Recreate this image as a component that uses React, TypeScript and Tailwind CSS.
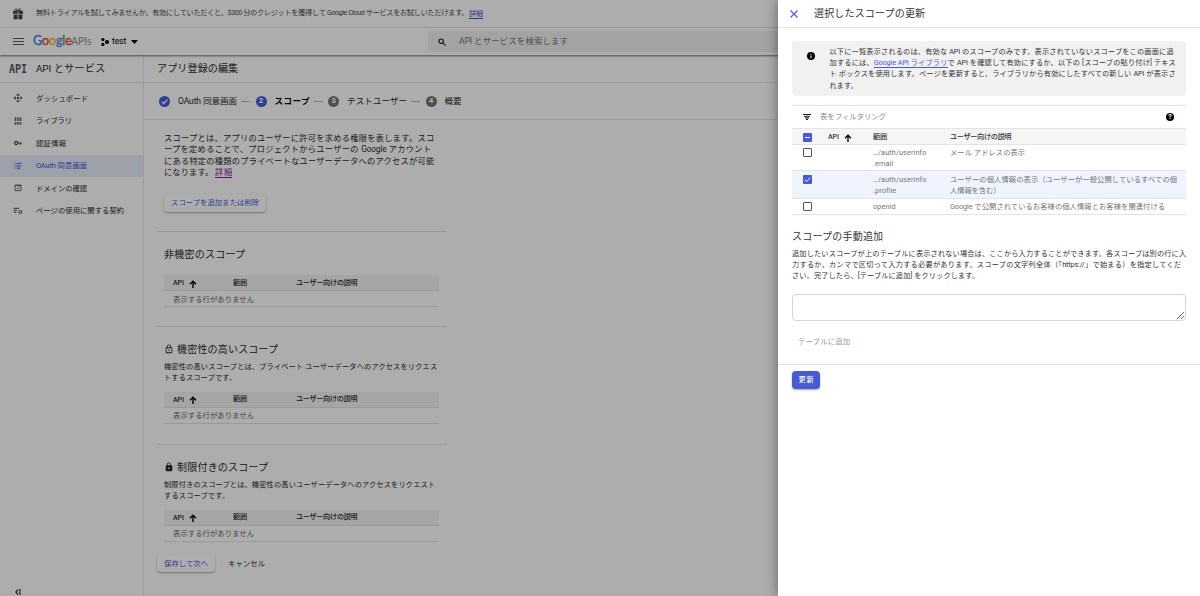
import type { ReactNode } from "react";
import { clsx } from "clsx";

// One line of text, spread over the width given in className.
function Line({ className, children }: { className?: string; children: ReactNode }) {
  return (
    <span className={clsx("block whitespace-nowrap [text-align-last:justify]", className)}>
      {children}
    </span>
  );
}

function ArrowUp({ className }: { className?: string }) {
  return (
    <svg viewBox="0 0 8 8" className={clsx("h-2 w-2 text-black", className)} fill="none" stroke="currentColor" strokeWidth="1.4">
      <path d="M4 8V1.2M1 4.2 4 1.2 7 4.2" />
    </svg>
  );
}

function Lock({ filled }: { filled?: boolean }) {
  return (
    <svg viewBox="0 0 24 24" className="h-[10px] w-[10px] shrink-0" fill="currentColor">
      {filled ? (
        <path d="M18 8h-1V6A5 5 0 0 0 7 6v2H6a2 2 0 0 0-2 2v10a2 2 0 0 0 2 2h12a2 2 0 0 0 2-2V10a2 2 0 0 0-2-2zm-6 9a2 2 0 1 1 0-4 2 2 0 0 1 0 4zm3.1-9H8.9V6a3.1 3.1 0 0 1 6.2 0v2z" />
      ) : (
        <path d="M12 17a2 2 0 1 0 0-4 2 2 0 0 0 0 4zm6-9h-1V6A5 5 0 0 0 7 6v2H6a2 2 0 0 0-2 2v10a2 2 0 0 0 2 2h12a2 2 0 0 0 2-2V10a2 2 0 0 0-2-2zM8.9 6a3.1 3.1 0 0 1 6.2 0v2H8.9V6zM18 20H6V10h12v10z" />
      )}
    </svg>
  );
}

const navItems = [
  {
    label: "ダッシュボード",
    width: "w-[52px]",
    icon: (
      <g fill="none" stroke="currentColor" strokeWidth="3.4">
        <path d="m8 5 4-4 4 4M8 19l4 4 4-4M5 8l-4 4 4 4M19 8l4 4-4 4" />
        <circle cx="12" cy="12" r="2" />
      </g>
    ),
  },
  {
    label: "ライブラリ",
    width: "w-[36px]",
    icon: <path d="M2 1h5v11H2zM9.5 1h5v11h-5zM17 1h5v11h-5zM2 15h5v8H2zM9.5 15h5v8h-5zM17 15h5v8h-5z" fill="currentColor" opacity=".8" />,
  },
  {
    label: "認証情報",
    width: "w-[30px]",
    icon: (
      <g fill="none" stroke="currentColor" strokeWidth="3.6">
        <circle cx="6.5" cy="12" r="4.7" />
        <path d="M11 12h13M19.5 12v5" />
      </g>
    ),
  },
  {
    label: "OAuth 同意画面",
    width: "w-[51px]",
    active: true,
    icon: (
      <g fill="none" stroke="currentColor" strokeWidth="2.8">
        <path d="M1 4h3M7 4h16M1 11h3M7 11h9M1 18h3M7 18h4" />
        <path d="m14 21 1-5 7-7M14 21l4-1" />
      </g>
    ),
  },
  {
    label: "ドメインの確認",
    width: "w-[51px]",
    icon: (
      <g fill="none" stroke="currentColor" strokeWidth="2.4">
        <path d="M3 3h18v17H3zM3 5h18M8 12l3 3 6-6" />
      </g>
    ),
  },
  {
    label: "ページの使用に関する契約",
    width: "w-[88px]",
    icon: (
      <g fill="none" stroke="currentColor" strokeWidth="3">
        <path d="M-1 4h16M-1 10h10M-1 16h8" />
        <circle cx="19" cy="15" r="4.5" />
      </g>
    ),
  },
];

function Step({ n, done, active, width, children }: { n: string; done?: boolean; active?: boolean; width: string; children: ReactNode }) {
  return (
    <div className="flex items-center">
      <span
        className={clsx(
          "flex h-[11px] w-[11px] items-center justify-center rounded-full text-[8px] font-bold text-white",
          done || active ? "bg-[#4a5bdb]" : "bg-[#757575]",
        )}
      >
        {done ? (
          <svg viewBox="0 0 11 11" className="h-[11px] w-[11px]" fill="none" stroke="white" strokeWidth="1.3">
            <path d="m2.8 5.7 1.9 1.9 3.6-3.8" />
          </svg>
        ) : (
          n
        )}
      </span>
      <Line className={clsx("ml-2 text-[8.5px]", width, active && "font-bold text-black")}>{children}</Line>
    </div>
  );
}

function Dash() {
  return <span className="mr-[1.5px] h-px w-[9px] bg-[#b5b5b5]" />;
}

function EmptyTable() {
  return (
    <div className="ml-[7px] w-[275px] text-[7.2px]">
      <div className="flex h-4 items-center border-b border-[#e4e4e4] bg-[#f4f4f4] pl-[9px] pt-px font-medium">
        <span className="w-[16px] text-[7px]">API</span>
        <ArrowUp className="mt-px" />
        <Line className="ml-[36px] w-[14px]">範囲</Line>
        <Line className="ml-[49px] w-[61px] tracking-[-0.5px]">ユーザー向けの説明</Line>
      </div>
      <div className="flex h-4 items-center border-b border-[#e4e4e4] pl-[9px] pt-px text-[#6a6a6a]">
        <Line className="w-[81px] text-[7.4px]">表示する行がありません</Line>
      </div>
    </div>
  );
}

function Console() {
  return (
    <div className="flex h-full flex-col bg-white text-[#2c2c2c]">
      <div className="flex h-7 shrink-0 items-center border-b border-[#ededed] pl-3 text-[7.2px] text-[#4d4d4d]">
        <svg viewBox="0 0 12 12" className="h-3 w-3" fill="#454545">
          <path d="M1 2.7h4.6v3H1zM6.4 2.7H11v3H6.4zM1.6 6.4h4v4.8h-4zM6.4 6.4h4v4.8h-4z" />
          <path d="M6 3C4.600 3 3 2.400 3.400 1.300S5.600 1 6 3c.4-2 2.200-2.800 2.600-1.700S7.400 3 6 3" fill="none" stroke="#454545" strokeWidth=".9" />
        </svg>
        <Line className="ml-3 w-[432px] tracking-[-0.5px]">
          無料トライアルを試してみませんか。有効にしていただくと、$300 分のクレジットを獲得して Google Cloud サービスをお試しいただけます。
        </Line>
        <Line className="ml-px w-[14px] border-b border-[#3f4fd0] leading-[9px] text-[#3f4fd0]">詳細</Line>
      </div>

      <header className="relative flex h-[27px] shrink-0 items-center pl-[13px] shadow-[0_1px_2px_rgba(0,0,0,0.55)]">
        <svg viewBox="0 0 11 8" className="h-2 w-[11px]" stroke="#5c5c5c" strokeWidth="1">
          <path d="M0 .5h11M0 3.5h11M0 6.5h11" />
        </svg>
        <div className="ml-[9px] flex w-[61px] items-baseline whitespace-nowrap">
          <span className="w-[38px] font-['Lato'] text-[12.5px] leading-[16px] tracking-[-0.1px] [-webkit-text-stroke:0.35px]">
            <span className="text-[#4285f4]">G</span>
            <span className="text-[#ea4335]">o</span>
            <span className="text-[#fbbc05]">o</span>
            <span className="text-[#4285f4]">g</span>
            <span className="text-[#34a853]">l</span>
            <span className="text-[#ea4335]">e</span>
          </span>
          <span className="font-['Lato'] text-[10.5px] text-[#8f8f8f]">APIs</span>
        </div>
        <svg viewBox="0 0 8 8" className="ml-[7px] h-2 w-2" fill="#000">
          <circle cx="1.9" cy="1.6" r="1.6" />
          <circle cx="1.9" cy="6.4" r="1.6" />
          <circle cx="6" cy="4" r="2" />
        </svg>
        <span className="ml-[3px] w-[19px] text-[8.5px] text-black">test</span>
        <svg viewBox="0 0 7 4" className="h-1 w-[7px]">
          <path d="M0 0h7L3.5 4z" />
        </svg>
        <div className="ml-[290px] flex h-[21px] grow items-center rounded bg-[#f1f1f1] pl-[10px]">
          <svg viewBox="0 0 8 8" className="h-2 w-2" fill="none" stroke="#222" strokeWidth="1.1">
            <circle cx="3.2" cy="3.2" r="2.2" />
            <path d="m4.9 4.9 2.7 2.7" />
          </svg>
          <Line className="ml-[13px] w-[109px] text-[8.5px] text-[#757575]">API とサービスを検索します</Line>
        </div>
      </header>

      <div className="flex min-h-0 grow">
        <aside className="flex w-36 shrink-0 flex-col border-r border-[#e6e6e6]">
          <div className="flex h-7 items-center border-b border-[#e6e6e6] pl-[9px]">
            <span className="w-[27px] font-['DejaVu_Sans_Mono'] text-[10px] font-bold leading-none tracking-[0px] text-[#5a5a5a]">
              <span className="inline-block scale-y-125">API</span>
            </span>
            <Line className="w-[69px] pt-px text-[9.9px]">API とサービス</Line>
          </div>
          <nav className="mt-[4px] flex flex-col">
            {navItems.map((item) => (
              <div
                key={item.label}
                className={clsx("flex h-[22.5px] items-center pl-[14px]", item.active && "bg-[#e8edfb] text-[#3f51e0]")}
              >
                <svg viewBox="0 0 24 24" className={clsx("h-2 w-2 overflow-visible", !item.active && "text-[#444]")}>
                  {item.icon}
                </svg>
                <Line className={clsx("ml-[14px] pt-[1.5px] text-[7.3px]", item.width)}>{item.label}</Line>
              </div>
            ))}
          </nav>
          <div className="mt-auto flex h-[8px] pl-[15px] pt-px">
            <svg viewBox="0 0 6 6" className="h-[6px] w-[6px]" fill="none" stroke="#333" strokeWidth="1.2">
              <path d="M3.2.5.8 3l2.4 2.5M5 0v6" />
            </svg>
          </div>
        </aside>

        <main className="flex grow flex-col">
          <div className="flex h-7 shrink-0 items-center border-b border-[#e6e6e6] pl-[13px]">
            <Line className="w-[81px] text-[10px]">アプリ登録の編集</Line>
          </div>
          <div className="flex h-[37px] shrink-0 items-center gap-1 border-b border-[#e6e6e6] pl-[15px]">
            <Step n="1" done width="w-[59px]">OAuth 同意画面</Step>
            <Dash />
            <Step n="2" active width="w-[35px]">スコープ</Step>
            <Dash />
            <Step n="3" width="w-[60px]">テストユーザー</Step>
            <Dash />
            <Step n="4" width="w-[17px]">概要</Step>
          </div>

          <div className="ml-[13px] flex w-[289px] flex-col">
            <div className="ml-[7px] mt-[13px] text-[8.2px] leading-[11.3px]">
              <Line className="w-[270px]">スコープとは、アプリのユーザーに許可を求める権限を表します。スコ</Line>
              <Line className="w-[267px]">ープを定めることで、プロジェクトからユーザーの Google アカウント</Line>
              <Line className="w-[270px]">にある特定の種類のプライベートなユーザーデータへのアクセスが可能</Line>
              <div className="flex">
                <Line className="w-[49px]">になります。</Line>
                <Line className="ml-[2px] h-[11px] w-[17px] border-b border-[#8a1e9b] text-[#8a1e9b]">詳細</Line>
              </div>
            </div>
            <div className="ml-[7px] mt-[16px] flex h-[18px] w-[102px] items-center rounded-sm pl-[7px] text-[#4a5bdb] shadow-[0_1px_2px_rgba(0,0,0,0.35)]">
              <Line className="w-[88px] text-[7.3px]">スコープを追加または削除</Line>
            </div>

            <section className="mt-[19px] h-[95px] border-t border-[#e4e4e4] pt-[14px]">
              <Line className="mb-[12px] ml-[7px] w-[81px] text-[10px] leading-[17px]">非機密のスコープ</Line>
              <EmptyTable />
            </section>
            <section className="h-[118px] border-t border-[#e4e4e4] pt-[14px]">
              <div className="ml-[7px] flex h-4 items-center gap-[3px]">
                <Lock />
                <Line className="w-[101px] text-[10px]">機密性の高いスコープ</Line>
              </div>
              <div className="mb-[8px] ml-[7px] mt-[4px] text-[7.2px] leading-[11.3px]">
                <Line className="w-[273px]">機密性の高いスコープとは、プライベート ユーザーデータへのアクセスをリクエス</Line>
                <Line className="w-[72px]">トするスコープです。</Line>
              </div>
              <EmptyTable />
            </section>
            <section className="h-[110px] border-t border-[#e4e4e4] pt-[14px]">
              <div className="ml-[7px] flex h-4 items-center gap-[3px]">
                <Lock filled />
                <Line className="w-[91px] text-[10px]">制限付きのスコープ</Line>
              </div>
              <div className="mb-[8px] ml-[7px] mt-[4px] text-[7.2px] leading-[11.3px]">
                <Line className="w-[271px]">制限付きのスコープとは、機密性の高いユーザーデータへのアクセスをリクエスト</Line>
                <Line className="w-[65px]">するスコープです。</Line>
              </div>
              <EmptyTable />
            </section>
            <div className="flex h-[18px] items-center">
              <div className="flex h-[18px] w-[58px] items-center rounded-sm pl-[7px] text-[#4a5bdb] shadow-[0_1px_2px_rgba(0,0,0,0.35)]">
                <Line className="w-[44px] text-[7.4px]">保存して次へ</Line>
              </div>
              <Line className="ml-[13px] w-[37px] text-[7.4px]">キャンセル</Line>
            </div>
          </div>
        </main>
      </div>
    </div>
  );
}

function Checkbox({ state }: { state: "on" | "off" | "mixed" }) {
  if (state === "off") {
    return <span className="h-[9px] w-[9px] rounded-[1px] border border-[#555]" />;
  }
  return (
    <svg viewBox="0 0 9 9" className="h-[9px] w-[9px] rounded-[1px] bg-[#4759db]" fill="none" stroke="white" strokeWidth="1">
      <path d={state === "on" ? "m1.8 4.7 1.8 1.8 3.7-3.9" : "M2 4.5h5"} />
    </svg>
  );
}

function ScopeRow({ state, className, scope, children }: { state: "on" | "off"; className: string; scope: string[]; children: ReactNode }) {
  return (
    <div className={clsx("flex border-b border-[#e4e4e4] pl-[11px] text-[7.3px] leading-[11px] text-[#757575]", className)}>
      <div className="w-[70px] pt-px">
        <div className="flex">
          <Checkbox state={state} />
        </div>
      </div>
      <div className="w-[77px] tracking-[0.1px]">
        {scope.map((part) => (
          <span key={part} className="block">{part}</span>
        ))}
      </div>
      <div>{children}</div>
    </div>
  );
}

function ScopePanel() {
  return (
    <div className="absolute inset-y-0 right-0 flex w-[422px] flex-col bg-white text-[#333] shadow-[0_0_12px_rgba(0,0,0,0.45)]">
      <div className="flex h-7 shrink-0 items-center border-b border-[#e4e4e4] pl-3">
        <svg viewBox="0 0 8 8" className="h-2 w-2" stroke="#4a5bdb" strokeWidth="1.2">
          <path d="m.5.5 7 7M7.5.5l-7 7" />
        </svg>
        <Line className="ml-4 w-[111px] text-[10px]">選択したスコープの更新</Line>
      </div>

      <div className="mx-[14px] mt-[13px] flex h-[55px] shrink-0 rounded-sm bg-[#f1f1f1] pl-[14.5px] pt-[5px]">
        <svg viewBox="0 0 8 8" className="mt-[6px] h-2 w-2">
          <circle cx="4" cy="4" r="4" />
          <path d="M4 1.7v1M4 3.5v2.8" stroke="white" strokeWidth="1" />
        </svg>
        <div className="ml-[15px] text-[7.2px] leading-[11.2px]">
          <Line className="w-[344px]">以下に一覧表示されるのは、有効な API のスコープのみです。表示されていないスコープをこの画面に追</Line>
          <Line className="w-[346px]">
            加するには、<span className="border-b border-[#4a5bdb] text-[#4a5bdb]">Google API ライブラリ</span>で API を確認して有効にするか、以下の [スコープの貼り付け] テキス
          </Line>
          <Line className="w-[346px]">ト ボックスを使用します。ページを更新すると、ライブラリから有効にしたすべての新しい API が表示さ</Line>
          <Line className="w-[28px]">れます。</Line>
        </div>
      </div>

      <div className="mx-[14px] mt-[9px] border-t border-[#e4e4e4]">
        <div className="flex h-[22px] items-center pl-[11px]">
          <svg viewBox="0 0 8 6" className="h-[6px] w-2" stroke="#222" strokeWidth="1.1">
            <path d="M0 .5h8M1 2.2h6M2 3.9h4M3 5.5h2" />
          </svg>
          <Line className="ml-[9px] w-[66px] text-[7.4px] text-[#8a8a8a]">表をフィルタリング</Line>
          <span className="ml-auto mr-[12px] flex h-2 w-2 items-center justify-center rounded-full bg-black text-[7px] font-bold text-white">?</span>
        </div>
        <div className="flex h-[17px] items-center border-y border-[#e4e4e4] bg-[#f5f5f5] pl-[11px] pt-px text-[7.2px] font-medium">
          <Checkbox state="mixed" />
          <span className="ml-[16px] w-[16px] text-[7px]">API</span>
          <ArrowUp className="mt-px" />
          <Line className="ml-[21px] w-[14px]">範囲</Line>
          <Line className="ml-[63px] w-[61px] tracking-[-0.5px]">ユーザー向けの説明</Line>
        </div>
        <ScopeRow state="off" className="h-[26px] pt-[2px]" scope={["…/auth/userinfo", ".email"]}>
          <Line className="w-[75px]">メール アドレスの表示</Line>
        </ScopeRow>
        <ScopeRow state="on" className="h-[28px] bg-[#eff4fe] pt-[3px]" scope={["…/auth/userinfo", ".profile"]}>
          <Line className="w-[227px]">ユーザーの個人情報の表示（ユーザーが一般公開しているすべての個</Line>
          <Line className="w-[48px]">人情報を含む）</Line>
        </ScopeRow>
        <ScopeRow state="off" className="h-[16px] pt-[2px]" scope={["openid"]}>
          <Line className="w-[215px]">Google で公開されているお客様の個人情報とお客様を関連付ける</Line>
        </ScopeRow>
      </div>

      <div className="mx-[14px] mt-[14px]">
        <Line className="w-[91px] text-[10px] leading-[16px]">スコープの手動追加</Line>
        <div className="mt-[3px] text-[7.2px] leading-[11.2px]">
          <Line className="w-[394px]">追加したいスコープが上のテーブルに表示されない場合は、ここから入力することができます。各スコープは別の行に入</Line>
          <Line className="w-[389px]">力するか、カンマで区切って入力する必要があります。スコープの文字列全体（「https://」で始まる）を指定してくだ</Line>
          <Line className="w-[187px]">さい。完了したら、[テーブルに追加] をクリックします。</Line>
        </div>
        <textarea className="mt-3 block h-[27px] w-[394px] resize rounded-sm border border-[#d6d6d6]" />
        <Line className="ml-[6px] mt-[15px] w-[52px] text-[7.4px] leading-[12px] text-[#9a9a9a]">テーブルに追加</Line>
      </div>

      <div className="mt-[16px] border-t border-[#e4e4e4] pl-[14px] pt-[6px]">
        <div className="flex h-[18px] w-7 items-center rounded-sm bg-[#4759d3] pl-[6.5px] pt-px text-[7.2px] font-medium text-white shadow-[0_1px_2px_rgba(0,0,0,0.35)]">
          <Line className="w-[15px]">更新</Line>
        </div>
      </div>
    </div>
  );
}

export default function App() {
  return (
    <div className="relative h-[596px] w-[1200px] overflow-hidden font-['Roboto','Noto_Sans_CJK_JP',sans-serif] tracking-[-0.1px]">
      <Console />
      <div className="absolute inset-0 bg-black/32" />
      <ScopePanel />
    </div>
  );
}
